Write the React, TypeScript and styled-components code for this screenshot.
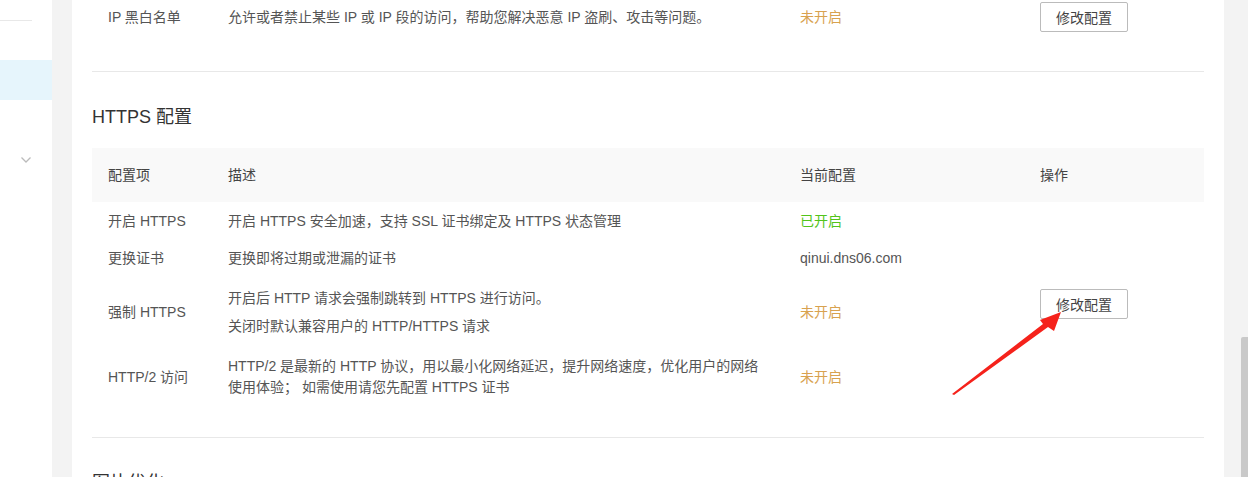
import React from 'react';
import styled, { createGlobalStyle, css } from 'styled-components';

const GlobalStyle = createGlobalStyle`
	html, body {
		margin: 0;
		padding: 0;
		height: 477px;
		overflow: hidden;
		background: #f3f3f3;
		font-family: "Liberation Sans", "Noto Sans CJK SC", sans-serif;
		font-size: 14px;
		color: #555;
	}
	* { box-sizing: border-box; }
`

const Page = styled.div`
	display: flex;
	height: 477px;
	position: relative;
`
const Sidebar = styled.div`
	width: 52px;
	background: #fff;
	display: flex;
	flex-direction: column;
`
const SideItem = styled.div<{ active?: boolean; h: number }>`
	height: ${props => props.h}px;
	display: flex;
	align-items: center;
	justify-content: center;
	${props => props.active && css`
		background: #e6f5fc;
	`}
`
const SideLine = styled.div`
	height: 1px;
	width: 32px;
	background: #e8e8e8;
`
const Card = styled.div`
	margin-left: 20px;
	width: 1152px;
	background: #fff;
	padding: 0 20px;
`
const Gutter = styled.div`
	flex: 1;
	display: flex;
	justify-content: flex-end;
`
const Thumb = styled.div`
	margin-top: 337px;
	width: 7px;
	background: #c9c9c9;
	border-radius: 2px 0 0 0;
`
const Row = styled.div<{ pad: number; head?: boolean }>`
	display: grid;
	grid-template-columns: 120px 572px 240px 1fr;
	align-items: center;
	padding: ${props => props.pad}px 0;
	${props => props.head && css`
		background: #f9f9f9;
		color: #444;
	`}
`
const Cell = styled.div<{ top?: boolean }>`
	padding-left: 16px;
	line-height: 20px;
	${props => props.top && css`
		align-self: start;
		padding-top: 1px;
	`}
`
const Desc = styled.div<{ lh?: number }>`
	width: 540px;
	line-height: ${props => props.lh || 20}px;
	& p {
		margin: 0;
	}
	& p + p {
		margin-top: 8px;
	}
`
const Status = styled.span<{ on?: boolean }>`
	color: ${props => props.on ? '#52c41a' : '#d8a24f'};
`
const Button = styled.button`
	width: 88px;
	height: 30px;
	border: 1px solid #bbb;
	border-radius: 2px;
	background: #fff;
	color: #444;
	font-family: inherit;
	font-size: 14px;
	padding: 0;
	cursor: pointer;
`
const Divider = styled.div<{ mt: number }>`
	margin-top: ${props => props.mt}px;
	height: 1px;
	background: #e8e8e8;
`
const Heading = styled.h3`
	margin: 32px 0 18px;
	font-size: 18px;
	font-weight: normal;
	line-height: 26px;
	color: #333;
`
const Arrow = styled.svg`
	position: absolute;
	left: 940px;
	top: 300px;
`

const Chevron = () => (
	<svg width="12" height="8" viewBox="0 0 12 8">
		<path d="M1.5 1.5 L6 6 L10.5 1.5" fill="none" stroke="#bbb" strokeWidth="1.3" />
	</svg>
)

export default function App() {
	return (
		<Page>
			<GlobalStyle />
			<Sidebar>
				<SideItem h={20} />
				<SideLine />
				<SideItem h={39} />
				<SideItem h={40} active />
				<SideItem h={40} />
				<SideItem h={40}><Chevron /></SideItem>
			</Sidebar>
			<Card>
				<Row pad={2}>
					<Cell>IP 黑白名单</Cell>
					<Cell><Desc>允许或者禁止某些 IP 或 IP 段的访问，帮助您解决恶意 IP 盗刷、攻击等问题。</Desc></Cell>
					<Cell><Status>未开启</Status></Cell>
					<Cell><Button>修改配置</Button></Cell>
				</Row>
				<Divider mt={37} />
				<Heading>HTTPS 配置</Heading>
				<Row pad={17} head>
					<Cell>配置项</Cell>
					<Cell>描述</Cell>
					<Cell>当前配置</Cell>
					<Cell>操作</Cell>
				</Row>
				<Row pad={9}>
					<Cell>开启 HTTPS</Cell>
					<Cell><Desc>开启 HTTPS 安全加速，支持 SSL 证书绑定及 HTTPS 状态管理</Desc></Cell>
					<Cell><Status on>已开启</Status></Cell>
					<Cell />
				</Row>
				<Row pad={8}>
					<Cell>更换证书</Cell>
					<Cell><Desc>更换即将过期或泄漏的证书</Desc></Cell>
					<Cell>qinui.dns06.com</Cell>
					<Cell />
				</Row>
				<Row pad={12}>
					<Cell>强制 HTTPS</Cell>
					<Cell>
						<Desc>
							<p>开启后 HTTP 请求会强制跳转到 HTTPS 进行访问。</p>
							<p>关闭时默认兼容用户的 HTTP/HTTPS 请求</p>
						</Desc>
					</Cell>
					<Cell><Status>未开启</Status></Cell>
					<Cell top><Button>修改配置</Button></Cell>
				</Row>
				<Row pad={8}>
					<Cell>HTTP/2 访问</Cell>
					<Cell><Desc lh={21}>HTTP/2 是最新的 HTTP 协议，用以最小化网络延迟，提升网络速度，优化用户的网络使用体验； 如需使用请您先配置 HTTPS 证书</Desc></Cell>
					<Cell><Status>未开启</Status></Cell>
					<Cell />
				</Row>
				<Divider mt={31} />
				<Heading>图片优化</Heading>
			</Card>
			<Gutter><Thumb /></Gutter>
			<Arrow width="130" height="100" viewBox="0 0 130 100">
				<polygon points="12,94 103,24 100,20 121,12 114,31 108,27 14,95" fill="#f5221b" />
			</Arrow>
		</Page>
	)
}
